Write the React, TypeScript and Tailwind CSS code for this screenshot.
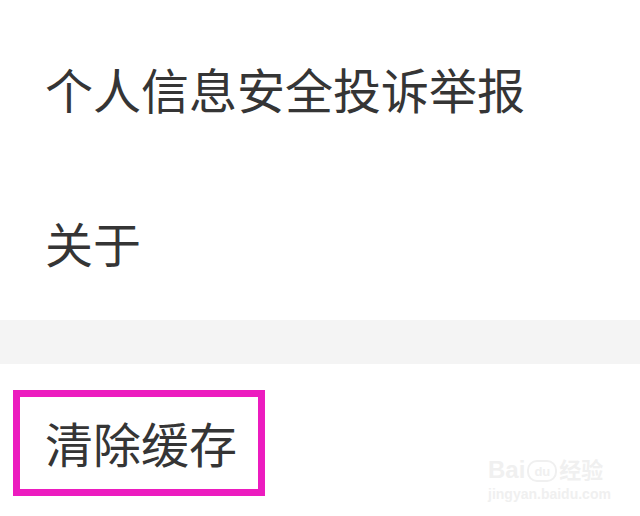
import React from "react";

const items = ["个人信息安全投诉举报", "关于"];

export default function App() {
  return (
    <div
      className="relative w-[640px] h-[516px] overflow-hidden bg-white text-[#353535]"
      style={{ fontFamily: '"Noto Sans CJK SC", "Noto Sans", sans-serif' }}
    >
      {/* settings rows */}
      <div className="flex h-[176px] items-center pl-[45px] text-[48px] leading-none">{items[0]}</div>
      <div className="flex h-[144px] items-center pb-[12px] pl-[45px] text-[48px] leading-none">{items[1]}</div>

      {/* section divider */}
      <div className="h-[44px] bg-[#f4f4f4]" />

      <div className="h-[152px] pt-[26px] pl-[13px]">
        <div className="flex h-[106px] w-[252px] items-center border-[7px] border-[#ec1cbf] pb-[2px] pl-[25px] text-[48px] leading-none">
          清除缓存
        </div>
      </div>

      {/* watermark */}
      <div
        className="pointer-events-none absolute left-[488px] top-[458px] flex flex-col items-start text-[#f0f0f0]"
        style={{ fontFamily: '"Liberation Sans", "Noto Sans CJK SC", sans-serif' }}
      >
        <div className="flex items-end gap-[2px] text-[24px] font-bold leading-none">
          <span>Bai</span>
          <span className="relative flex h-[22px] w-[30px] items-center justify-center rounded-[10px] border-2 border-[#f0f0f0] text-[13px]">
            du
          </span>
          <span className="text-[22px]">经验</span>
        </div>
        <div className="mt-[5px] text-[14px] font-bold leading-none">jingyan.baidu.com</div>
      </div>
    </div>
  );
}
